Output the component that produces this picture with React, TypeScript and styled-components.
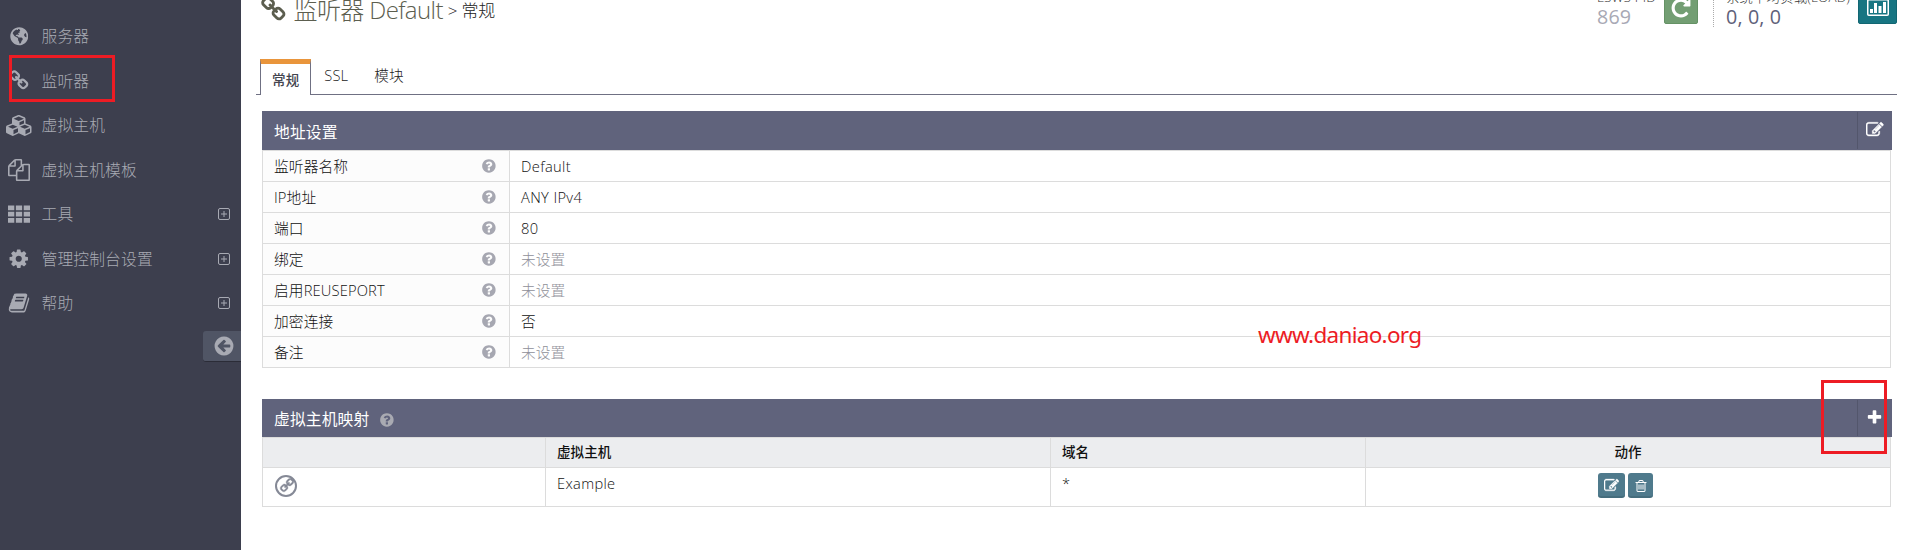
import React from "react";
import styled, { createGlobalStyle } from "styled-components";
import { FaGlobeAmericas } from "react-icons/fa";

const GlobalStyle = createGlobalStyle`
  * { box-sizing: border-box; }
  body {
    margin: 0;
    background: #fff;
    overflow: hidden;
    font-family: "Open Sans", "Noto Sans CJK SC", sans-serif;
    font-size: 14.7px;
    font-weight: 300;
    letter-spacing: 0.15px;
    color: #111;
  }
`;

const glyphs = {
  link: "M1456 1216q0-40-28-68l-208-208q-28-28-68-28-42 0-72 32 3 3 19 18.5t21.5 21.5 15 19 13 25.5 3.5 27.5q0 40-28 68t-68 28q-15 0-27.5-3.5t-25.5-13-19-15-21.5-21.5-18.5-19q-33 31-33 73 0 40 28 68l206 207q27 27 68 27 40 0 68-26l147-146q28-28 28-67zm-703-705q0-40-28-68l-206-207q-28-28-68-28-39 0-68 27l-147 146q-28 28-28 67 0 40 28 68l208 208q27 27 68 27 42 0 72-31-3-3-19-18.5t-21.5-21.5-15-19-13-25.5-3.5-27.5q0-40 28-68t68-28q15 0 27.5 3.5t25.5 13 19 15 21.5 21.5 18.5 19q33-31 33-73zm895 705q0 120-85 203l-147 146q-83 83-203 83-121 0-204-85l-206-207q-83-83-83-203 0-123 88-209l-88-88q-86 88-208 88-120 0-204-84l-208-208q-84-84-84-204t85-203l147-146q83-83 203-83 121 0 204 85l206 207q83 83 83 203 0 123-88 209l88 88q86-88 208-88 120 0 204 84l208 208q84 84 84 204z",
  help: "M1024 1376v-192q0-14-9-23t-23-9h-192q-14 0-23 9t-9 23v192q0 14 9 23t23 9h192q14 0 23-9t9-23zm256-672q0-88-55.5-163t-138.5-116-170-41q-243 0-371 213-15 24 8 42l132 100q7 6 19 6 16 0 25-12 53-68 86-92 34-24 86-24 48 0 85.5 26t37.5 59q0 38-20 61t-68 45q-63 28-115.5 86.5t-52.5 125.5v36q0 14 9 23t23 9h192q14 0 23-9t9-23q0-19 21.5-49.5t54.5-49.5q32-18 49-28.5t46-35 44.5-48 28-60.5 12.5-81zm384 192q0 209-103 385.5t-279.5 279.5-385.5 103-385.5-103-279.5-279.5-103-385.5 103-385.5 279.5-279.5 385.5-103 385.5 103 279.5 279.5 103 385.5z",
  edit: "M888 1184l116-116-152-152-116 116v56h96v96h56zm440-720q-16-16-33 1l-350 350q-17 17-1 33t33-1l350-350q17-17 1-33zm80 594v190q0 119-84.5 203.5t-203.5 84.5h-832q-119 0-203.5-84.5t-84.5-203.5v-832q0-119 84.5-203.5t203.5-84.5h832q63 0 117 25 15 7 18 23 3 17-9 29l-49 49q-14 14-32 8-23-6-45-6h-832q-66 0-113 47t-47 113v832q0 66 47 113t113 47h832q66 0 113-47t47-113v-126q0-13 9-22l64-64q15-15 35-7t20 29zm-96-738l288 288-672 672h-288v-288zm444 132l-92 92-288-288 92-92q28-28 68-28t68 28l152 152q28 28 28 68t-28 68z",
  gear: "M1152 896q0-106-75-181t-181-75-181 75-75 181 75 181 181 75 181-75 75-181zm512-109v222q0 12-8 23t-20 13l-185 28q-19 54-39 91 35 50 107 138 10 12 10 25t-9 23q-27 37-99 108t-94 71q-12 0-26-9l-138-108q-44 23-91 38-16 136-29 186-7 28-36 28h-222q-14 0-24.5-8.5t-11.5-21.5l-28-184q-49-16-90-37l-141 107q-10 9-25 9-14 0-25-11-126-114-165-168-7-10-7-23 0-12 8-23 15-21 51-66.5t54-70.5q-27-50-41-99l-183-27q-13-2-21-12.5t-8-23.5v-222q0-12 8-23t19-13l186-28q14-46 39-92-40-57-107-138-10-12-10-24 0-10 9-23 26-36 98.5-107.5t94.5-71.5q13 0 26 10l138 107q44-23 91-38 16-136 29-186 7-28 36-28h222q14 0 24.5 8.5t11.5 21.5l28 184q49 16 90 37l142-107q9-9 24-9 13 0 25 10 129 119 165 170 7 8 7 22 0 12-8 23-15 21-51 66.5t-54 70.5q26 50 41 98l183 28q13 2 21 12.5t8 23.5z",
  book: "M1703 478q40 57 18 129l-275 906q-19 64-76.5 107.5t-122.5 43.5h-923q-77 0-148.5-53.5t-99.5-131.5q-24-67-2-127 0-4 3-27t4-37q1-8-3-21.5t-3-19.5q2-11 8-21t16.5-23.5 16.5-23.5q23-38 45-91.5t30-91.5q3-10 .5-30t-.5-28q3-11 17-28t17-23q21-36 42-92t25-90q1-9-2.5-32t.5-28q4-13 22-30.5t22-22.5q19-26 42.5-84.5t27.5-96.5q1-8-3-25.5t-2-26.5q2-8 9-18t18-23 17-21q8-12 16.5-30.5t15-35 16-36 19.5-32 26.5-23.5 36-11.5 47.5 5.5l-1 3q38-9 51-9h761q74 0 114 56t18 130l-274 906q-36 119-71.5 153.5t-128.5 34.5h-869q-27 0-38 15-11 16-1 43 24 70 144 70h923q29 0 56-15.5t35-41.5l300-987q7-22 5-57 38 15 59 43zm-1064 2q-4 13 2 22.5t20 9.5h608q13 0 25.5-9.5t16.5-22.5l21-64q4-13-2-22.5t-20-9.5h-608q-13 0-25.5 9.5t-16.5 22.5zm-83 256q-4 13 2 22.5t20 9.5h608q13 0 25.5-9.5t16.5-22.5l21-64q4-13-2-22.5t-20-9.5h-608q-13 0-25.5 9.5t-16.5 22.5z",
  files: "M1696 384q40 0 68 28t28 68v1216q0 40-28 68t-68 28h-960q-40 0-68-28t-28-68v-288h-544q-40 0-68-28t-28-68v-672q0-40 20-88t48-76l408-408q28-28 76-48t88-20h416q40 0 68 28t28 68v328q68-40 128-40h416zm-544 213l-299 299h299v-299zm-640-384l-299 299h299v-299zm196 647l316-316v-416h-384v416q0 40-28 68t-68 28h-416v640h512v-256q0-40 20-88t48-76zm956 804v-1152h-384v416q0 40-28 68t-68 28h-416v640h896z",
  cubes: "M640 1632l384-192v-314l-384 164v342zm-64-454l404-173-404-173-404 173zm1088 454l384-192v-314l-384 164v342zm-64-454l404-173-404-173-404 173zm-448-293l384-165v-266l-384 164v267zm-64-379l441-189-441-189-441 189zm1088 518v416q0 36-19 67t-52 47l-448 224q-25 14-57 14t-57-14l-448-224q-4-2-7-4-2 2-7 4l-448 224q-25 14-57 14t-57-14l-448-224q-33-16-52-47t-19-67v-416q0-38 21.5-70t56.5-48l434-186v-400q0-38 21.5-70t56.5-48l448-192q23-10 50-10t50 10l448 192q35 16 56.5 48t21.5 70v400l434 186q36 16 57 48t21 70z",
  back: "M1408 960v-128q0-26-19-45t-45-19h-502l189-189q19-19 19-45t-19-45l-91-91q-18-18-45-18t-45 18l-362 362-91 91q-18 18-18 45t18 45l91 91 362 362q18 18 45 18t45-18l91-91q18-18 18-45t-18-45l-189-189h502q26 0 45-19t19-45zm256-64q0 209-103 385.5t-279.5 279.5-385.5 103-385.5-103-279.5-279.5-103-385.5 103-385.5 279.5-279.5 385.5-103 385.5 103 279.5 279.5 103 385.5z",
  repeat: "M1664 256v448q0 26-19 45t-45 19h-448q-42 0-59-40-17-39 14-69l138-138q-148-137-349-137-104 0-198.5 40.5t-163.5 109.5-109.5 163.5-40.5 198.5 40.5 198.5 109.5 163.5 163.5 109.5 198.5 40.5q119 0 225-52t179-147q7-10 23-12 15 0 25 9l137 138q9 8 9.5 20.5t-7.5 22.5q-109 132-264 204.5t-327 72.5q-156 0-298-61t-245-164-164-245-61-298 61-298 164-245 245-164 298-61q147 0 284.5 55.5t244.5 156.5l130-129q29-31 70-14 39 17 39 59z",
  trash: "M704 736v576q0 14-9 23t-23 9h-64q-14 0-23-9t-9-23v-576q0-14 9-23t23-9h64q14 0 23 9t9 23zm256 0v576q0 14-9 23t-23 9h-64q-14 0-23-9t-9-23v-576q0-14 9-23t23-9h64q14 0 23 9t9 23zm256 0v576q0 14-9 23t-23 9h-64q-14 0-23-9t-9-23v-576q0-14 9-23t23-9h64q14 0 23 9t9 23zm128 724v-948h-896v948q0 22 7 40.5t14.5 27 10.5 8.5h832q3 0 10.5-8.5t14.5-27 7-40.5zm-672-1076h448l-48-117q-7-9-17-11h-317q-10 2-17 11zm928 32v64q0 14-9 23t-23 9h-96v948q0 83-47 143.5t-113 60.5h-832q-66 0-113-58.5t-47-141.5v-952h-96q-14 0-23-9t-9-23v-64q0-14 9-23t23-9h309l70-167q15-37 54-63t79-26h320q40 0 79 26t54 63l70 167h309q14 0 23 9t9 23z",
  grid: "M0 200h512v384H0zM640 200h512v384H640zM1280 200h512v384h-512zM0 712h512v384H0zM640 712h512v384H640zM1280 712h512v384h-512zM0 1224h512v384H0zM640 1224h512v384H640zM1280 1224h512v384h-512z",
  plus: "M1600 736v192q0 40-28 68t-68 28h-416v416q0 40-28 68t-68 28H800q-40 0-68-28t-28-68v-416H288q-40 0-68-28t-28-68V736q0-40 28-68t68-28h416V224q0-40 28-68t68-28h192q40 0 68 28t28 68v416h416q40 0 68 28t28 68z",
};

type GlyphName = keyof typeof glyphs;

const Svg = styled.svg`
  display: block;
  flex: none;
  fill: currentColor;
`;

const Icon = ({ name, size, bold }: { name: GlyphName; size: number; bold?: boolean }) => {
  const w = name === "cubes" ? 2304 : 1792;
  return (
    <Svg
      width={(size * w) / 1792}
      height={size}
      viewBox={`0 0 ${w} 1792`}
      stroke={bold ? "currentColor" : "none"}
      strokeWidth={40}
    >
      <path d={glyphs[name]} />
    </Svg>
  );
};

const Page = styled.div`
  position: relative;
  display: flex;
  width: 1905px;
  height: 550px;
  overflow: hidden;
`;

const Sidebar = styled.aside`
  display: flex;
  flex-direction: column;
  width: 241px;
  padding-top: 14px;
  background: #3d3f4e;
  color: #a8aab3;
`;

const NavItem = styled.a`
  display: flex;
  align-items: center;
  height: 44.5px;
  padding: 0 11px 0 4px;
  font-size: 15.75px;
`;

const NavIcon = styled.span`
  display: flex;
  justify-content: center;
  width: 30px;
  margin-right: 7.5px;
`;

const NavLabel = styled.span`
  flex: 1;
  margin-top: -1px;
`;

const Collapse = styled.button`
  display: flex;
  align-items: center;
  align-self: flex-end;
  width: 38px;
  height: 31px;
  margin-top: 5.5px;
  padding: 0 0 0 10px;
  border: 0;
  border-bottom: 1px solid #2b2c37;
  border-radius: 3px 0 0 3px;
  background: #505565;
  color: #a8aab3;
`;

const Main = styled.main`
  flex: 1;
  padding: 0 8px 0 15px;
`;

const TopBar = styled.header`
  display: flex;
  align-items: flex-start;
  height: 59px;
  overflow: hidden;
`;

const Title = styled.h1`
  display: flex;
  align-items: flex-start;
  flex: 1;
  margin: -2px 0 0 5px;
  font-size: 24px;
  font-weight: 300;
  line-height: 24px;
  letter-spacing: -0.6px;
  color: #5c5e4f;

  > svg { margin-top: -2px; }
`;

const TitleText = styled.span`
  margin-left: 6px;
`;

const Crumb = styled.span`
  margin-left: 5px;
  padding-top: 1px;
  font-size: 17px;
  letter-spacing: -0.2px;
  color: #222;
`;

const Stat = styled.div<{ $tone: string; $width: number }>`
  width: ${(p) => p.$width}px;
  margin-top: -12px;
  font-size: 13.4px;
  line-height: 18px;
  color: #333;
  white-space: nowrap;

  strong {
    display: block;
    font-size: 19.7px;
    font-weight: 400;
    line-height: 22px;
    color: ${(p) => p.$tone};
  }
`;

const StatButton = styled.button<{ $bg: string; $edge: string; $width: number }>`
  display: flex;
  align-items: center;
  justify-content: center;
  width: ${(p) => p.$width}px;
  height: 36px;
  margin-top: -12px;
  padding: 3px 0 0;
  border: 1px solid ${(p) => p.$edge};
  border-radius: 2px;
  background: ${(p) => p.$bg};
  color: #fff;
`;

const StatDivider = styled.div`
  width: 1px;
  height: 27px;
  margin: 0 12px 0 15px;
  border-left: 1px dotted #aaa;
`;

const Tabs = styled.nav`
  display: flex;
  height: 36px;
  padding-left: 4px;
  border-bottom: 1px solid #6f7083;
`;

const Tab = styled.a<{ $active?: boolean }>`
  height: ${(p) => (p.$active ? 36 : 34)}px;
  padding: ${(p) => (p.$active ? "5px 11px 0" : "0 13px")};
  border: solid #6f7083;
  border-width: ${(p) => (p.$active ? "0 1px" : "0")};
  border-top: ${(p) => (p.$active ? "5px solid #e9953b" : "0")};
  background: #fff;
  font-size: ${(p) => (p.$active ? 13.5 : 14.625)}px;
  font-weight: ${(p) => (p.$active ? 500 : 300)};
  line-height: ${(p) => (p.$active ? 22 : 32)}px;
  color: ${(p) => (p.$active ? "#44454f" : "#222")};
`;

const Panel = styled.section<{ $gap: number }>`
  width: 1630px;
  margin: ${(p) => p.$gap}px 0 0 6px;
`;

const PanelHead = styled.header<{ $height: number }>`
  display: flex;
  align-items: center;
  gap: 10px;
  height: ${(p) => p.$height}px;
  padding-left: 12px;
  background: #60637c;
  color: #fff;
  font-size: 15.75px;
  font-weight: 400;
`;

const PanelTitle = styled.h2`
  margin: 1px 0 0;
  font-size: inherit;
  font-weight: inherit;
`;

const HeadHelp = styled.span`
  margin-top: 3px;
  color: #a9aab2;
`;

const PanelTool = styled.button`
  display: flex;
  align-items: center;
  align-self: stretch;
  width: 35px;
  margin: 1px 0 1px auto;
  padding: 0 0 2px 8px;
  border: 0;
  border-left: 1px solid #53566c;
  background: transparent;
  color: #fff;
`;

const Table = styled.div`
  width: 1629px;
  border: 1px solid #dcdcdc;
  border-bottom: 0;
`;

const SettingRow = styled.div`
  display: grid;
  grid-template-columns: 247px 1fr;
  height: 31px;
  border-bottom: 1px solid #dcdcdc;
`;

const SettingName = styled.div`
  display: flex;
  align-items: center;
  justify-content: space-between;
  padding: 0 12px 1px 11px;
  border-right: 1px solid #dcdcdc;
  background: #fcfcfc;
  svg { color: #a6a7b1; }
`;

const SettingValue = styled.div<{ $unset?: boolean }>`
  display: flex;
  align-items: center;
  padding: 0 0 1px 11px;
  letter-spacing: ${(p) => (p.$unset ? 0.1 : 0.35)}px;
  color: ${(p) => (p.$unset ? "#8f9099" : "inherit")};
`;

const MapRow = styled.div<{ $head?: boolean }>`
  display: grid;
  grid-template-columns: 283px 505px 315px 1fr;
  height: ${(p) => (p.$head ? 30 : 39)}px;
  border-bottom: 1px solid #dcdcdc;
  background: ${(p) => (p.$head ? "#ecedef" : "#fff")};
  font-size: ${(p) => (p.$head ? 13.5 : 14.625)}px;
  font-weight: ${(p) => (p.$head ? 500 : 300)};
  letter-spacing: ${(p) => (p.$head ? 0.1 : 0.35)}px;
`;

const MapCell = styled.div<{ $center?: boolean; $actions?: boolean }>`
  display: flex;
  align-items: center;
  justify-content: ${(p) => (p.$center ? "center" : "flex-start")};
  gap: 3px;
  padding: 0 ${(p) => (p.$actions ? 16 : 11)}px 2px 11px;
  border-right: 1px solid #dcdcdc;
  &:last-child { border-right: 0; }
`;

const MapHeading = styled.span`
  margin-top: -1px;
`;

const MapText = styled.span`
  margin-top: -6px;
`;

const LinkBadge = styled.span`
  display: flex;
  align-items: center;
  justify-content: center;
  width: 22px;
  height: 22px;
  margin: -1px 0 0 1px;
  border: 2px solid #858996;
  border-radius: 50%;
  color: #858996;
  svg { transform: scaleX(-1); }
`;

const ActionButton = styled.button<{ $width: number }>`
  display: flex;
  align-items: center;
  justify-content: center;
  width: ${(p) => p.$width}px;
  height: 25px;
  margin-top: -1px;
  padding: 2px 0 0;
  border: 0;
  border-bottom: 2px solid #456d7d;
  border-radius: 3px;
  background: #4f7a8c;
  color: #fff;
`;

const Marker = styled.div<{ $x: number; $y: number; $w: number; $h: number }>`
  position: absolute;
  left: ${(p) => p.$x}px;
  top: ${(p) => p.$y}px;
  width: ${(p) => p.$w}px;
  height: ${(p) => p.$h}px;
  border: 3px solid #ed1c24;
`;

const Watermark = styled.div`
  position: absolute;
  left: 1258px;
  top: 320px;
  font: 400 22.5px/30px "Noto Sans", sans-serif;
  letter-spacing: -0.7px;
  color: #ed1c24;
`;

const nav: { icon: GlyphName | "globe"; size: number; label: string; more?: boolean }[] = [
  { icon: "globe", size: 18.5, label: "服务器" },
  { icon: "link", size: 21, label: "监听器" },
  { icon: "cubes", size: 21, label: "虚拟主机" },
  { icon: "files", size: 22, label: "虚拟主机模板" },
  { icon: "grid", size: 22, label: "工具", more: true },
  { icon: "gear", size: 21.5, label: "管理控制台设置", more: true },
  { icon: "book", size: 22, label: "帮助", more: true },
];

const settings: { name: string; value?: string }[] = [
  { name: "监听器名称", value: "Default" },
  { name: "IP地址", value: "ANY IPv4" },
  { name: "端口", value: "80" },
  { name: "绑定" },
  { name: "启用REUSEPORT" },
  { name: "加密连接", value: "否" },
  { name: "备注" },
];

const Expand = () => (
  <Svg width="12" height="12" viewBox="0 0 12 12">
    <rect x=".5" y=".5" width="11" height="11" rx="1.5" fill="none" stroke="currentColor" />
    <path d="M5.500 3h1v2.500H9v1H6.500V9h-1V6.500H3v-1h2.500z" />
  </Svg>
);

const Chart = () => (
  <Svg width="22" height="17" viewBox="0 0 22 17">
    <rect x=".75" y=".75" width="20.5" height="15.5" rx="1" fill="none" stroke="currentColor" strokeWidth="1.5" />
    <path d="M3 10h3v4H3zM7 4h3v10H7zM11.5 7h3v7h-3zM16 3h3v11h-3z" />
  </Svg>
);

export default function App() {
  return (
    <Page>
      <GlobalStyle />
      <Sidebar>
        {nav.map((n) => (
          <NavItem key={n.label}>
            <NavIcon>
              {n.icon === "globe" ? <FaGlobeAmericas size={n.size} /> : <Icon name={n.icon} size={n.size} />}
            </NavIcon>
            <NavLabel>{n.label}</NavLabel>
            {n.more && <Expand />}
          </NavItem>
        ))}
        <Collapse>
          <Icon name="back" size={22} />
        </Collapse>
      </Sidebar>
      <Main>
        <TopBar>
          <Title>
            <Icon name="link" size={26.5} />
            <TitleText>监听器 Default</TitleText>
            <Crumb>&gt; 常规</Crumb>
          </Title>
          <Stat $tone="#a8a9b5" $width={67}>
            LSWS PID
            <strong>869</strong>
          </Stat>
          <StatButton $bg="#739e73" $edge="#659265" $width={34}>
            <Icon name="repeat" size={22} />
          </StatButton>
          <StatDivider />
          <Stat $tone="#5f617a" $width={132}>
            系统平均负载(LOAD)
            <strong>0, 0, 0</strong>
          </Stat>
          <StatButton $bg="#177582" $edge="#126672" $width={39}>
            <Chart />
          </StatButton>
        </TopBar>
        <Tabs>
          <Tab $active>常规</Tab>
          <Tab>SSL</Tab>
          <Tab>模块</Tab>
        </Tabs>
        <Panel $gap={16}>
          <PanelHead $height={39}>
            <PanelTitle>地址设置</PanelTitle>
            <PanelTool>
              <Icon name="edit" size={17.5} bold />
            </PanelTool>
          </PanelHead>
          <Table>
            {settings.map((s) => (
              <SettingRow key={s.name}>
                <SettingName>
                  {s.name}
                  <Icon name="help" size={15.75} />
                </SettingName>
                <SettingValue $unset={!s.value}>{s.value ?? "未设置"}</SettingValue>
              </SettingRow>
            ))}
          </Table>
        </Panel>
        <Panel $gap={31}>
          <PanelHead $height={38}>
            <PanelTitle>虚拟主机映射</PanelTitle>
            <HeadHelp>
              <Icon name="help" size={15.75} />
            </HeadHelp>
            <PanelTool>
              <Icon name="plus" size={17} />
            </PanelTool>
          </PanelHead>
          <Table>
            <MapRow $head>
              <MapCell />
              <MapCell>
                <MapHeading>虚拟主机</MapHeading>
              </MapCell>
              <MapCell>
                <MapHeading>域名</MapHeading>
              </MapCell>
              <MapCell $center>
                <MapHeading>动作</MapHeading>
              </MapCell>
            </MapRow>
            <MapRow>
              <MapCell>
                <LinkBadge>
                  <Icon name="link" size={15} bold />
                </LinkBadge>
              </MapCell>
              <MapCell>
                <MapText>Example</MapText>
              </MapCell>
              <MapCell>
                <MapText>*</MapText>
              </MapCell>
              <MapCell $center $actions>
                <ActionButton $width={27}>
                  <Icon name="edit" size={15} bold />
                </ActionButton>
                <ActionButton $width={25}>
                  <Icon name="trash" size={14} />
                </ActionButton>
              </MapCell>
            </MapRow>
          </Table>
        </Panel>
      </Main>
      <Watermark>www.daniao.org</Watermark>
      <Marker $x={9} $y={55} $w={106} $h={47} />
      <Marker $x={1821} $y={380} $w={66} $h={74} />
    </Page>
  );
}
